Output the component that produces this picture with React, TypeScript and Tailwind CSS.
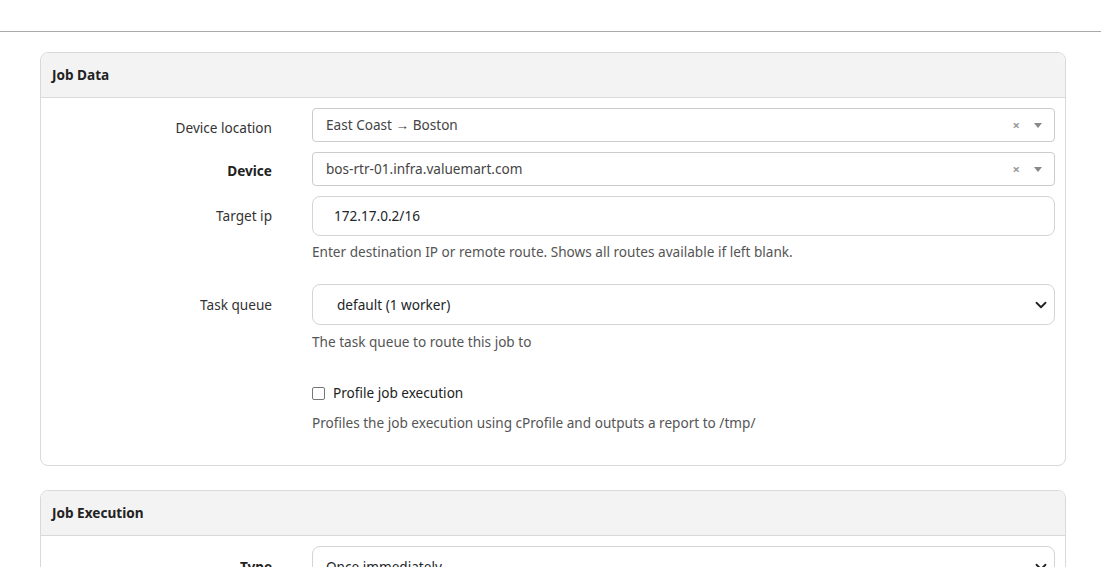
import React from 'react';

const font = { fontFamily: '"Noto Sans", "Open Sans", sans-serif' };

const Select2Box = ({ value }: { value: string }) => (
  <div className="flex h-[34px] items-center rounded-[4px] border border-[#cccccc] bg-white pl-[13px] pr-[12px] text-[13.6px] leading-[18px] text-[#444]">
    <span className="flex-1 truncate">{value}</span>
    <span className="mr-[14px] text-[13px] font-bold text-[#999]">×</span>
    <span className="h-0 w-0 border-x-[4px] border-t-[5px] border-x-transparent border-t-[#888]" />
  </div>
);

const Chevron = () => (
  <svg width="12" height="12" viewBox="0 0 16 16" className="text-[#222]">
    <path d="M2 5l6 6 6-6" fill="none" stroke="currentColor" strokeWidth="2.4" strokeLinecap="round" strokeLinejoin="round" />
  </svg>
);

const Label = ({ children, bold, pt }: { children: React.ReactNode; bold?: boolean; pt: string }) => (
  <div className={`w-[231px] shrink-0 text-right ${pt} ${bold ? 'font-bold text-[#222]' : 'text-[#333]'}`}>{children}</div>
);

export default function App() {
  return (
    <div className="min-h-screen bg-white text-[13.6px] leading-[18px]" style={font}>
      <div className="h-[32px] border-b border-[#a9a9a9]" />
      <div className="px-[40px] pt-[20px] pr-[35px]">
        {/* Job Data */}
        <div className="rounded-[8px] border border-[#d9d9d9]">
          <div className="flex h-[45px] items-center rounded-t-[8px] border-b border-[#d9d9d9] bg-[#f3f3f3] px-[11px] font-bold text-[#222]">
            Job Data
          </div>
          <div className="pb-[33px] pr-[10px] pt-[10px]">
            <div className="flex">
              <Label pt="pt-[11px]">Device location</Label>
              <div className="ml-[40px] flex-1">
                <Select2Box value="East Coast → Boston" />
              </div>
            </div>
            <div className="mt-[10px] flex">
              <Label bold pt="pt-[10px]">Device</Label>
              <div className="ml-[40px] flex-1">
                <Select2Box value="bos-rtr-01.infra.valuemart.com" />
              </div>
            </div>
            <div className="mt-[10px] flex">
              <Label pt="pt-[11px]">Target ip</Label>
              <div className="ml-[40px] flex-1">
                <div className="flex h-[40px] items-center rounded-[8px] border border-[#d4d4d4] bg-white px-[21px] text-[#212529]">
                  172.17.0.2/16
                </div>
                <div className="mt-[7px] text-[#555]">
                  Enter destination IP or remote route. Shows all routes available if left blank.
                </div>
              </div>
            </div>
            <div className="mt-[23px] flex">
              <Label pt="pt-[12px]">Task queue</Label>
              <div className="ml-[40px] flex-1">
                <div className="flex h-[41px] items-center rounded-[8px] border border-[#d4d4d4] bg-white pl-[24px] pr-[7px] text-[#212529]">
                  <span className="flex-1">default (1 worker)</span>
                  <Chevron />
                </div>
                <div className="mt-[8px] text-[#555]">The task queue to route this job to</div>
              </div>
            </div>
            <div className="mt-[33px] flex">
              <div className="w-[231px] shrink-0" />
              <div className="ml-[40px] flex-1">
                <div className="flex items-center text-[#222]">
                  <span className="mr-[8px] inline-block h-[13px] w-[13px] rounded-[2px] border border-[#767676] bg-white" />
                  Profile job execution
                </div>
                <div className="mt-[12px] text-[#555]">
                  Profiles the job execution using cProfile and outputs a report to /tmp/
                </div>
              </div>
            </div>
          </div>
        </div>

        {/* Job Execution */}
        <div className="mt-[24px] rounded-[8px] border border-[#d9d9d9]">
          <div className="flex h-[45px] items-center rounded-t-[8px] border-b border-[#d9d9d9] bg-[#f3f3f3] px-[11px] font-bold text-[#222]">
            Job Execution
          </div>
          <div className="pb-[30px] pr-[10px] pt-[10px]">
            <div className="flex">
              <Label bold pt="pt-[12px]">Type</Label>
              <div className="ml-[40px] flex-1">
                <div className="flex h-[41px] items-center rounded-[8px] border border-[#d4d4d4] bg-white pl-[13px] pr-[7px] text-[#212529]">
                  <span className="flex-1">Once immediately</span>
                  <Chevron />
                </div>
              </div>
            </div>
          </div>
        </div>
      </div>
    </div>
  );
}
